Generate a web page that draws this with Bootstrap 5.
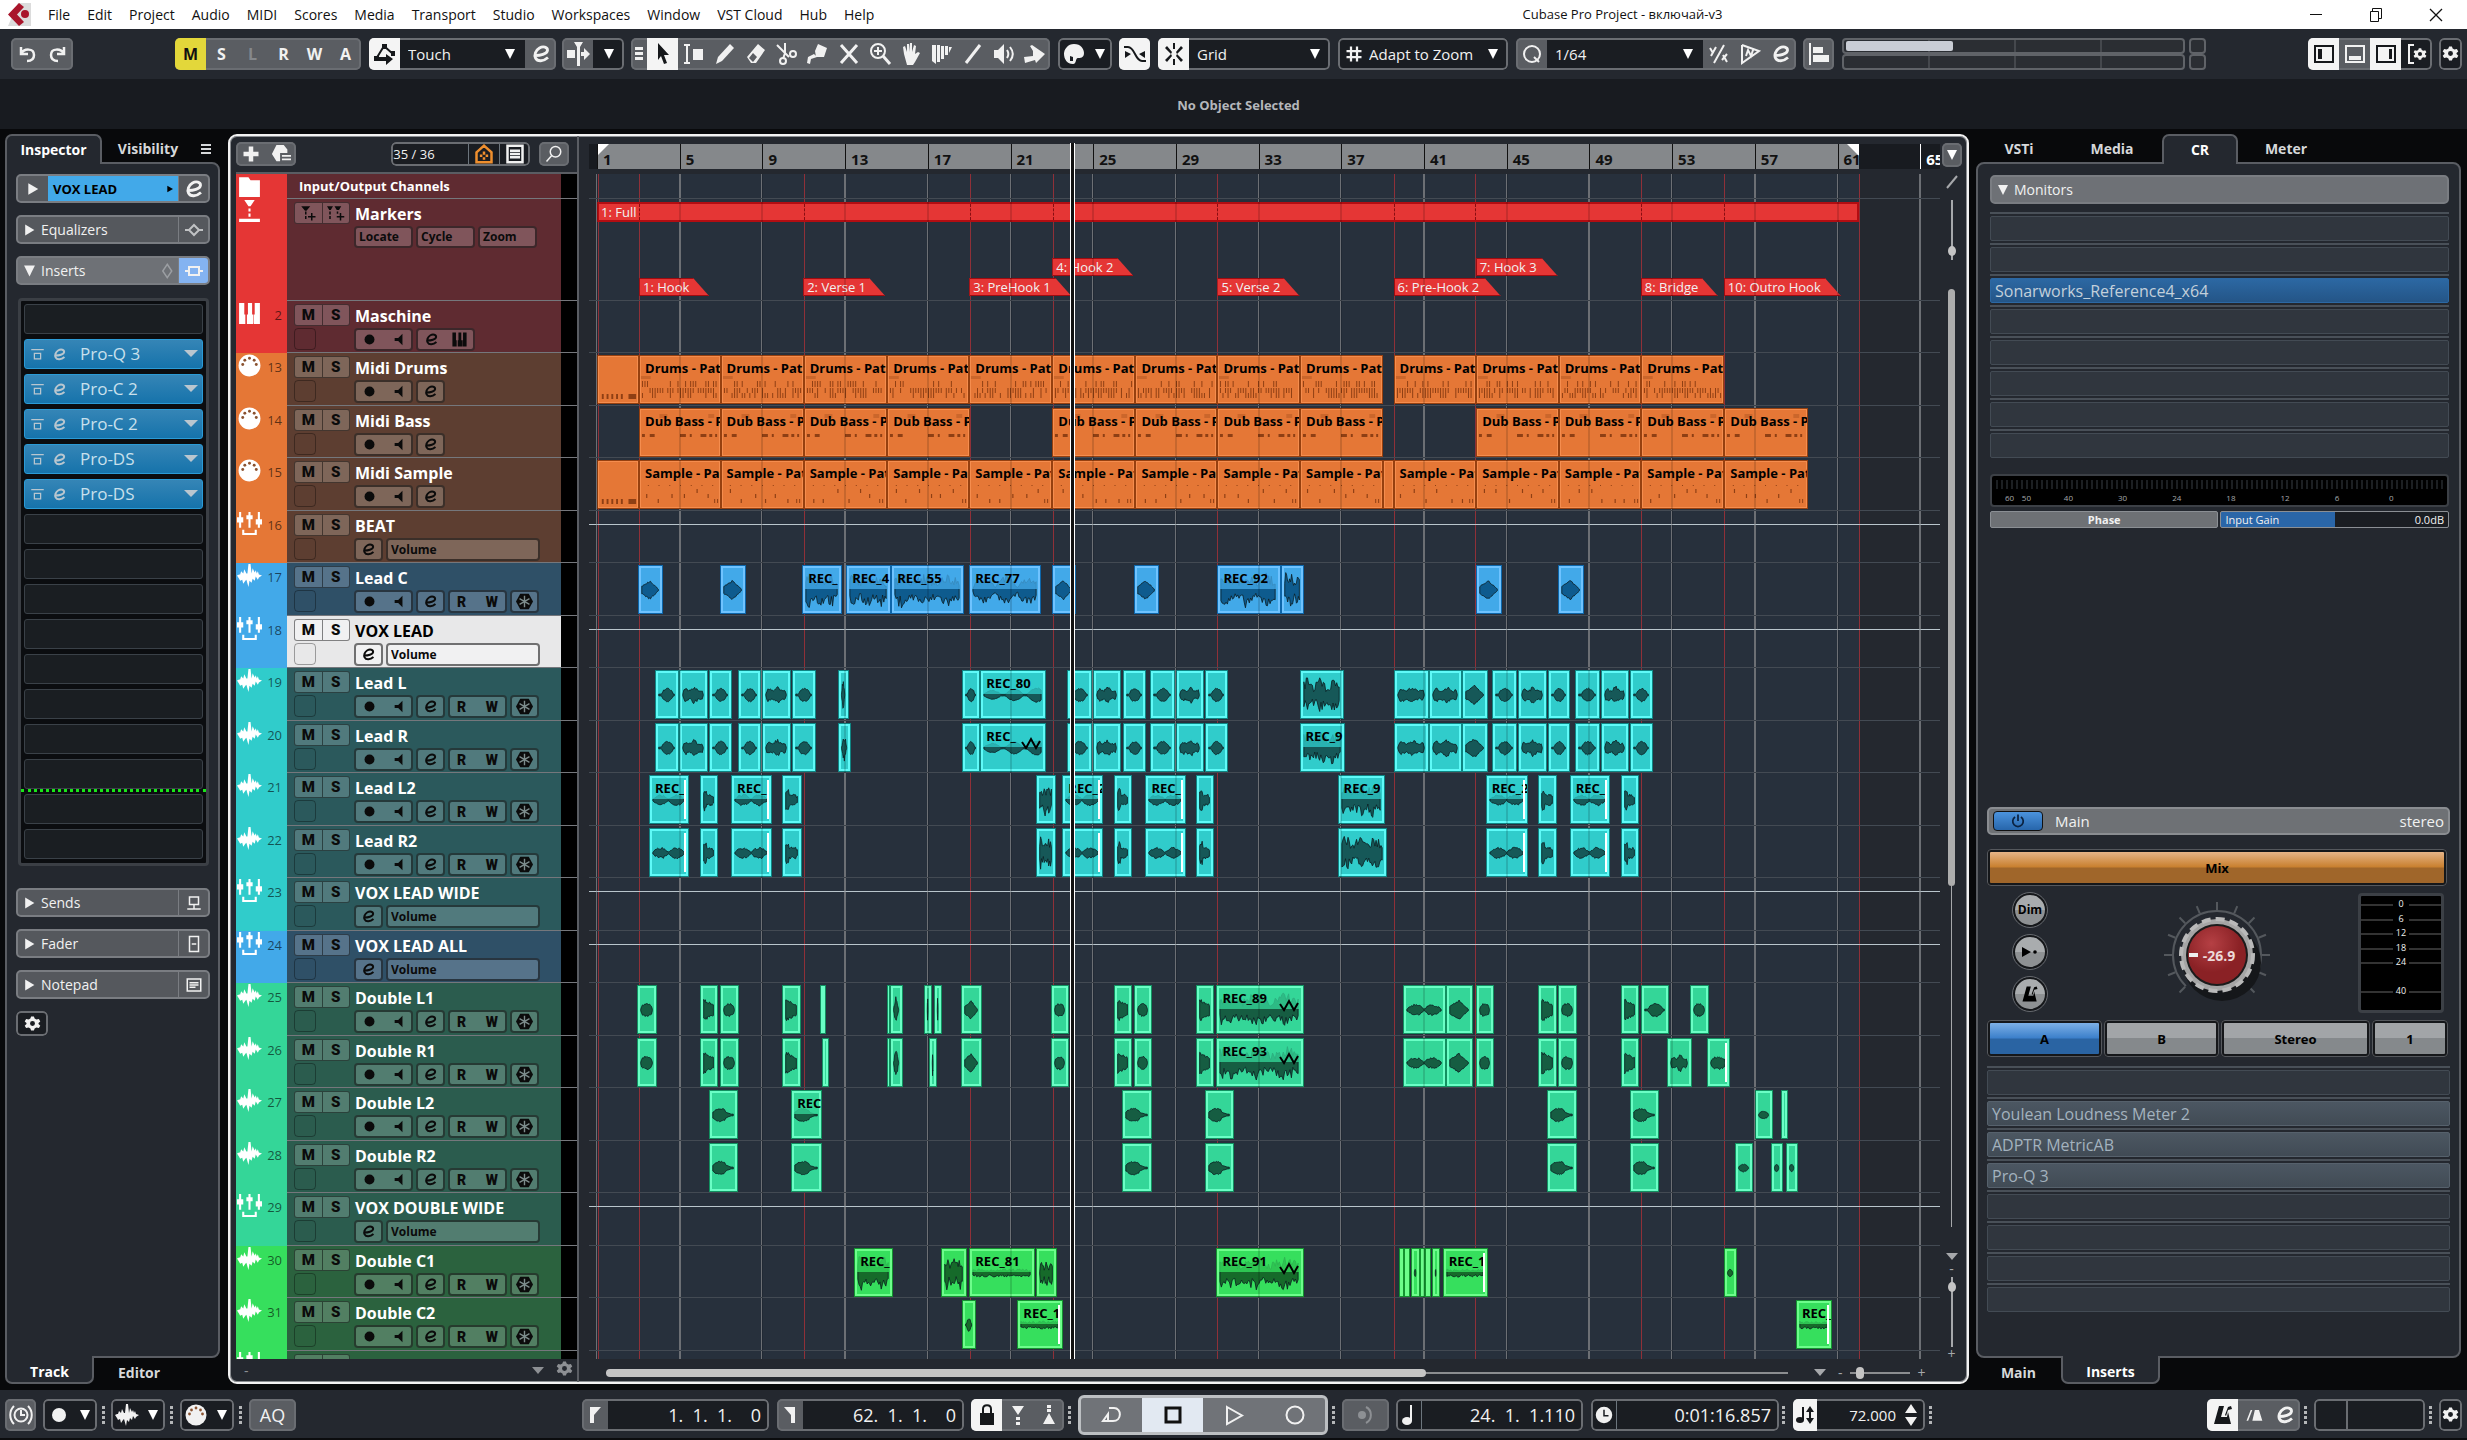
<!DOCTYPE html>
<html lang="en">
<head>
<meta charset="utf-8">
<meta name="viewport" content="width=device-width, initial-scale=1">
<title>Cubase Pro Project - включай-v3</title>
<link href="https://cdn.jsdelivr.net/npm/bootstrap@5.3.0/dist/css/bootstrap.min.css" rel="stylesheet">
<style>
:root{--panel:#24282f;--line:#5a5d63;--field:#1a1d22;--key:#5a5d62}
body{font-family:"Open Sans","Noto Sans",sans-serif;font-size:14px;line-height:18px;background:#08090b;color:#f1f1f1;overflow:hidden}
svg{display:block;fill:currentColor;flex:none}
button,select,input{font:inherit;color:inherit}
button{background:none;border:0;padding:0}
.ico{width:24px;height:24px}
.st{fill:none;stroke:currentColor;stroke-width:2}
.titlebar{height:29px;background:#fff;color:#111}
.titlebar a{color:#111;text-decoration:none}
.logo-box{width:23px;height:23px;margin-left:8px;margin-right:17px}
.titlebar nav{gap:17px}
.win-title{left:0;right:0;pointer-events:none;text-align:center;padding-left:778px;line-height:27px;font-size:13px;white-space:nowrap}
.win-keys{gap:44px;margin-right:23px}
.toolrow{height:50px;background:var(--panel);padding-bottom:1px}
.grp{height:32px;border-radius:5px;background:var(--key);display:flex;align-items:stretch;overflow:hidden;position:relative;flex:none}
.grp::before{content:"";position:absolute;inset:0;border:2px solid #6a6d72;border-radius:5px;pointer-events:none;z-index:1}
.grp>button,.cell{width:31px;display:flex;align-items:center;justify-content:center;font-weight:700;font-size:16px}
.grp>.on,.grp>.yel{position:relative;z-index:2}
.grp .dd{width:23px}
.grp .dd::after{right:7px}
.grp.dark,.dark{background:var(--field)}
.on{background:#f4f4f4;color:#16181b}
.yel{background:#e3d73a;color:#111}
.pick{position:relative;background:var(--field);display:flex}
.pick select{appearance:none;background:transparent;border:0;width:100%;padding:0 8px;font-size:15px;outline:0}
.pick::after,.tri::after{content:"";position:absolute;right:10px;top:11px;border:5px solid transparent;border-top:10px solid #fff;border-bottom:0}
.tri{position:relative}
.infobar{height:50px;background:#181b20;color:#b4b7bb;font-size:13px;font-weight:700;padding-left:10px;padding-top:2px}
.mainrow{padding:5px 6px 6px 5px;min-height:0}
.side-l{width:215px;margin-right:8px}
.side-r{width:485px;margin-left:7px}
.tabs{height:30px;font-weight:700;font-size:14px;position:relative;z-index:1;margin-bottom:-2px;flex:none}
.tabs.low{height:28px;margin:-2px 0 0}
.tabx{border:2px solid transparent;display:flex;align-items:center;justify-content:center;color:#d6d8da}
.low .tabx{padding-top:6px}
.tabx.act{background:var(--panel);border-color:var(--line);border-bottom:0;border-radius:7px 7px 0 0;color:#fff}
.low .tabx.act{border:2px solid var(--line);border-top:0;border-radius:0 0 7px 7px}
.pbody{border:2px solid var(--line);border-radius:8px;background:var(--panel);min-height:0}
.side-l .pbody{border-radius:0 8px 8px 0;padding:10px 8px 0 9px}
.side-r .pbody{padding:11px 10px 0 12px;border-radius:8px}
.sect{height:29px;border:2px solid #7a7d82;border-radius:5px;background:#55585d;display:flex;overflow:hidden;margin-bottom:12px;font-size:14px}
.sect.open{background:#6e7176}
.sect .nm{flex:1;display:flex;align-items:center;gap:5px;padding-left:5px}
.sect .rt{width:30px;border-left:1px solid #7a7d82;display:flex;align-items:center;justify-content:center}
.rack{border:3px solid #3b3f45;background:#0b0d10;border-radius:4px;padding:3px 3px 4px;margin:13px 1px 22px 2px;position:relative}
.slotl{height:30px;border:1px solid #3a4148;border-radius:3px;background:#1a1e22;margin-bottom:5px;display:flex;align-items:center;color:#c9e0ec;font-size:17px;width:100%}
.slotl.fx{background:linear-gradient(#3585b6,#1673ab);border-color:#2b9bd6}
.slotl.fx svg{color:#b9c6cf}
.slotl.fx span{flex:1;text-align:left;padding-left:12px}
.rack .slotl:last-child{margin-bottom:0}
.green{position:absolute;left:0;right:0;top:488px;border-top:3px dotted #19e619}
.center{border:2px solid #f2f2f2;border-radius:9px;background:var(--panel);box-shadow:inset 0 0 0 1px #8b8e92;min-width:0;overflow:hidden}
.tl{width:349px;padding:2px 0 0 6px;border-right:2px solid var(--line)}
.tl-head{height:36px;border-bottom:2px solid var(--line);padding:4px 8px 0 0;flex:none}
.tl-head .grp,.vs .grp{height:24px}
.tl-head .grp>button,.tl-head .cell{font-size:13px}
.rows{min-height:0;overflow:hidden;background:#000}
.rw{flex:none;height:52px;border-bottom:1px solid #75777c}
.rw.tall{height:53px}
.rw.io{height:25px}.rw.mk{height:102px}
.trk{display:flex;position:relative}
.strip{width:51px;background:var(--s);display:flex;position:relative;margin-bottom:-1px}
.strip svg{width:25px;height:25px;color:#fff;margin:0 0 0 1px}
.strip span{position:absolute;right:5px;top:5px;font-size:13px;color:#0009}
.tb{width:274px;background:var(--b);padding:3px 0 0 7px;display:grid;grid-template-columns:60px 1fr;grid-template-rows:22px 24px;row-gap:2px;color:#fff}
.tb .nam{font-weight:700;font-size:16px;line-height:24px;padding-left:1px;white-space:nowrap}
.ms{display:flex;width:56px;height:22px;border:1px solid #0007;border-radius:3px;background:var(--k);color:#0b0b0b;font:900 15px/18px Roboto,sans-serif}
.ms button{flex:1;border-right:1px solid #0007;display:flex;align-items:center;justify-content:center}.ms button:last-child{border:0}
.sq{width:22px;height:22px;border:1px solid #0005;border-radius:4px}
.kx{display:flex;gap:3px;color:#0b0b0b}
.kb{height:23px;border:2px solid #0008;border-radius:4px;background:var(--k);display:flex;align-items:center;justify-content:space-around;width:29px;font:900 14px/18px Roboto,sans-serif}
.kb.w2{width:59px;justify-content:space-between;padding:0 7px}
.kb svg{width:17px;height:17px}
.kb.w2 svg{margin:0 -2px}
select.kb{appearance:none;width:154px;padding:0 3px;font:700 12px/18px "Open Sans",sans-serif;color:#0b0b0b}
.kb.tx{width:59px;font:700 12px/16px "Open Sans",sans-serif;height:22px;justify-content:flex-start;padding-left:3px}
.cR{--s:#e53635;--b:#5f2b31;--k:#80555b}
.cO{--s:#e57736;--b:#5d3e31;--k:#7e6659;--d:#96400f;--l:#f58d4e;--w:#8e3f14}
.cB{--s:#42a9e9;--b:#2f5067;--k:#56738a;--d:#0d66aa;--l:#6fc3ff;--w:#0e5b8e}
.cT{--s:#30cccb;--b:#2b595c;--k:#517a7d;--d:#0f8583;--l:#5ffaf8;--w:#165858}
.cG{--s:#34d698;--b:#2b5c4e;--k:#527d70;--d:#129060;--l:#6afec5;--w:#165d42}
.cH{--s:#36df5d;--b:#2b623e;--k:#527f62;--d:#13922f;--l:#6dfd8b;--w:#166a2a}
.sel .tb{--b:#e8e8e9;--k:#f1f1f2;color:#000}
.arr{margin-left:10px;min-width:0;position:relative}
.ruler{height:25px;margin:8px 0 5px;background:#181b20;position:relative;overflow:hidden;flex:none}
.ruler .rng{position:absolute;top:0;bottom:0;background:#85888b}
.ruler b{position:absolute;top:0;height:25px;border-left:1px solid #111;padding-left:5px;font-size:15px;line-height:30px;color:#111}
.canvas{position:relative;min-height:0;overflow:hidden}
.bgr{position:absolute;top:0;bottom:0;background:#27303c}
.gl{position:absolute;top:0;bottom:0;width:1px;background:#7d8186}
.gl.t{width:2px}
.gl.r{background:#8f3038}
.gl.o{background:#0002;width:2px}
.lane{position:relative;border-color:#434a53}
.lane.auto::before{content:"";position:absolute;left:0;right:0;top:13px;border-top:1px solid #b9c5cc}
.clip{position:absolute;top:2px;height:49px;background:var(--s);border:1px solid var(--d);box-shadow:inset 0 0 0 2px var(--l);overflow:hidden;color:#000}
.clip.cO{box-shadow:inset 0 0 0 1px var(--l)}
.clip svg{position:absolute;left:0;top:0;width:100%;height:100%}
.clip .wv{fill:var(--w);stroke:#0a1a1ecc;stroke-width:1}
.clip .nt{fill:var(--w)}
.clip .veil{position:absolute;left:2px;top:2px;right:3px;height:21px;background:var(--s);opacity:.78}
.clip i{position:absolute;left:5px;top:3px;font:700 13px/18px "Open Sans",sans-serif;white-space:nowrap}
.clip u{position:absolute;right:2px;top:4px;bottom:4px;width:2px;background:#fff}
.full{position:absolute;top:3px;height:20px;background:#e53635;border:2px solid #b30d12;font-size:13px;line-height:17px;padding-left:2px}
.full s{position:absolute;top:0;bottom:0;border-left:1px dashed #8a0d12}
.flag{position:absolute;height:18px;background:#e53635;font-size:13px;line-height:17px;padding-left:3px;clip-path:polygon(0 0,calc(100% - 16px) 0,100% 100%,0 100%);white-space:nowrap;border:1px solid #a00b10}
.play{position:absolute;top:7px;bottom:23px;width:5px;border:solid #fff;border-width:0 1px;background:#111;z-index:3}
.foot{height:23px;flex:none}
.vs{width:27px;padding:7px 4px 0 0;color:#a6a8ab}
.thumbx{background:#adadad;border-radius:4px}
input[type=range]{appearance:none;background:transparent;height:14px;padding:0}
input[type=range]::-webkit-slider-runnable-track{height:2px;background:#8b8d90}
input[type=range]::-webkit-slider-thumb{appearance:none;width:8px;height:12px;border-radius:4px;background:#c4c4c4;margin-top:-5px}
input.hs::-webkit-slider-thumb{width:820px;height:8px;margin-top:-3px}
.slot{height:31px;border-top:2px solid #495058;padding-top:2px}
.slot button{display:block;width:100%;height:25px;border:1px solid #434b54;background:#30363e;border-radius:2px;text-align:left;padding-left:4px;font-size:16px;line-height:22px;color:#a3b2be}
.slot .fl{background:linear-gradient(#4c5762,#414b55);border-color:#56616c}
.slot .bl{background:linear-gradient(#2c68a3,#245587);border-color:#2c68a3;color:#c3d0db}
.mixer{margin-left:-3px;margin-right:-1px}
.bar-h{height:28px;border:2px solid #8a8d91;border-radius:5px;background:#6e7175;font-size:15px}
.mtr{height:33px;background:#000;border:2px solid #3c4046;border-radius:4px;font-size:8px;line-height:10px;color:#a5a8ab;flex:none}
.mtr .tk{height:9px;background:repeating-linear-gradient(90deg,#1c1f22 0 2px,#000 2px 5px)}
.mtr span{width:58px}
.phs{height:17px;font-size:11px;line-height:15px;font-weight:700;flex:none}
.phs>*{border:1px solid #8b8f94;border-radius:2px}
.bigk{height:37px;border:3px solid #15171a;outline:1px solid #55585d;outline-offset:-1px;border-radius:4px;background:linear-gradient(#a2a5a8 50%,#85898c 50%);color:#000;font-weight:700;font-size:13px}
.bigk.org{background:linear-gradient(#e6b487,#c9802f 48%,#a0662a 52%)}
.bigk.blu{background:linear-gradient(#7db0e6,#3c80cb 48%,#2a64a3 52%)}
.rnd{width:34px;height:34px;border-radius:50%;background:linear-gradient(#a9acae 50%,#8e9193 50%);border:2px solid #15171a;outline:1px solid #66696e;color:#000;font-weight:700;font-size:12px;display:flex;align-items:center;justify-content:center}
.lvl{width:86px;height:120px;background:#000;border:3px solid #3c4046;border-radius:4px;position:relative}
.botrow{height:50px;background:var(--panel);border-bottom:2px solid #0b0c0e;padding-top:1px}
.dots{width:3px;height:18px;flex:none;background:repeating-linear-gradient(#b4b6b8 0 3px,transparent 3px 5px)}
.posi{background:transparent;border:0;min-width:0;width:100%;text-align:right;padding:0 8px;font-size:18px;outline:0}
.trans{height:40px;border:3px solid #bcbfc2;border-radius:6px;background:#707378;display:flex;overflow:hidden;flex:none}
.trans button{width:61px;display:flex;align-items:center;justify-content:center}
.perf{width:343px;height:32px;display:grid;flex:none}
.perf div{border:2px solid #606368;border-radius:4px;background:repeating-linear-gradient(90deg,#2b2e33 0 84px,#45484d 84px 86px);position:relative}
.perf span{position:absolute;left:2px;top:1px;bottom:1px;width:107px;background:#c9cdd5;border-radius:2px}
</style>
</head>
<body class="vh-100 d-flex flex-column">
<svg width="0" height="0" class="position-absolute" aria-hidden="true">
<symbol id="e" viewBox="0 0 24 24"><path class="st" style="stroke-width:2.800" d="M6 13.500C11 13.600 18 12 18.500 8.500 18.800 5 14 4 10.500 6 6.500 8.300 5 13 6.500 16 8.500 20 14.500 19.500 19 15.500"/></symbol>
<symbol id="keys" viewBox="0 0 24 24"><path d="M2 2h5v11h1v9H2zM9.500 13h1V2h4v11h1v9h-6zM17 2h5v20h-6v-9h1z"/></symbol>
<symbol id="midi" viewBox="0 0 24 24"><circle cx="12" cy="12" r="10.500"/><g fill="#8a5230"><circle cx="5.500" cy="11" r="1.400"/><circle cx="7.500" cy="7" r="1.400"/><circle cx="12" cy="5" r="1.400"/><circle cx="16.500" cy="7" r="1.400"/><circle cx="18.500" cy="11" r="1.400"/></g></symbol>
<symbol id="grpi" viewBox="0 0 24 24"><path d="M2 1h2v5h2v5H4v5H2v-5H0V6h2zM11 1h2v3h2v4h-2v8h-2V8H9V4h2zM20 1h2v7h2v5h-2v3h-2v-3h-2V8h2zM5 18h2v3h10v-3h2v5H5z"/></symbol>
<symbol id="wav" viewBox="0 0 24 24"><path d="M0 12l2-1 1 0 1-3 2 2 1-4 2 4 1 0L11 1l2 0 1 9 1-5 2 4 1-2 1 3 1-2 1 3 3 1-3 2-1 2-2-3-1 4-2-2-1 4-2-2-1 6-2-7-1 1-2 3-1-4-2 1-1-2z"/></symbol>
<symbol id="fold" viewBox="0 0 24 24"><path d="M2 3h9l2 3h9v16H2z"/></symbol>
<symbol id="mark" viewBox="0 0 24 24"><path d="M7 1h10l-4 6h-2zM11 9h2v3h-2zM11 14h2v3h-2zM2 19h20v3H2z"/></symbol>
<symbol id="spk" viewBox="0 0 24 24"><path d="M8 10h5l6-6v16l-6-6H8z"/></symbol>
<symbol id="rec" viewBox="0 0 24 24"><circle cx="12" cy="12" r="7"/></symbol>
<symbol id="frz" viewBox="0 0 24 24"><path d="M6 1h12l6 11-6 11H6L0 12z"/><path d="M12 4v16M5 8l14 8M19 8L5 16" stroke="#7d8c8c" stroke-width="2"/></symbol>
<symbol id="gear" viewBox="0 0 24 24"><path fill-rule="evenodd" d="M10 2h4l1 3 2.500 1.300L21 5.500l2 3.500-2.500 2.200v1.600L23 15l-2 3.500-3.500-.8L15 19l-1 3h-4l-1-3-2.500-1.300-3.500.8L1 15l2.500-2.200v-1.600L1 9l2-3.500 3.500.8L9 5zM12 8.500a3.500 3.500 0 100 7 3.500 3.500 0 000-7z"/></symbol>
<symbol id="rt" viewBox="0 0 24 24"><path d="M4 2l17 10-17 10z"/></symbol>
<symbol id="dn" viewBox="0 0 24 24"><path d="M2 2h20L12 22z"/></symbol>
<symbol id="met" viewBox="0 0 24 24"><path fill-rule="evenodd" d="M8 3h5l-3 11h6l1-5 3 12H3zM14 12l3-8 3-1 1 3-4 1-2 6z"/></symbol>
<symbol id="byp" viewBox="0 0 24 24"><path class="st" d="M2 4h20M7 10h10v9H7z"/></symbol>
<symbol id="mk1" viewBox="0 0 24 24"><path d="M3 3h12l-5 6H8zM8 10h2v4H8zM8 16h2v4H8zM16 12h2v4h4v2h-4v4h-2v-4h-4v-2h4z"/></symbol>
<symbol id="mk2" viewBox="0 0 24 24"><path d="M0 3h8L5 8H3zM3 10h2v4H3zM3 16h2v4H3zM10 3h9l-3 5h-3zM13 10h2v3h-2zM17 12h2v4h4v2h-4v4h-2v-4h-4v-2h4z"/></symbol>
</svg>

<header class="titlebar flex-shrink-0 d-flex align-items-center position-relative">
  <svg class="logo-box" viewBox="0 0 23 23"><path d="M10 0h13v23H0z" fill="#dcdcdc"/><path d="M11 0L0 11.500 11 23l5-4-7-7.500L16 4z" fill="#a9152b"/><circle cx="17" cy="11" r="4" fill="#a9152b"/></svg>
  <nav class="d-flex"><a href="#">File</a><a href="#">Edit</a><a href="#">Project</a><a href="#">Audio</a><a href="#">MIDI</a><a href="#">Scores</a><a href="#">Media</a><a href="#">Transport</a><a href="#">Studio</a><a href="#">Workspaces</a><a href="#">Window</a><a href="#">VST Cloud</a><a href="#">Hub</a><a href="#">Help</a></nav>
  <div class="win-title position-absolute"><span>Cubase Pro Project - включай-v3</span></div>
  <div class="win-keys d-flex ms-auto position-relative">
    <button aria-label="Minimize"><svg width="16" height="16" viewBox="0 0 16 16"><path d="M2 7.500h12" stroke="#111"/></svg></button>
    <button aria-label="Restore"><svg width="16" height="16" viewBox="0 0 16 16"><path style="fill:none" stroke="#111" d="M2.500 4.500h8v10h-8zM4.500 4V1.500h9v10H11"/></svg></button>
    <button aria-label="Close"><svg width="16" height="16" viewBox="0 0 16 16"><path d="M2 2l12 12M14 2L2 14" stroke="#111" stroke-width="1.300"/></svg></button>
  </div>
</header>

<div class="toolrow flex-shrink-0 d-flex align-items-center" id="toolbar">
  <div class="grp" style="margin-left:11px"><button aria-label="Undo"><svg class="ico" viewBox="0 0 24 24"><path class="st" style="stroke-width:2.500" d="M6 5v7h7M6 12c3-6 13-6 13 1 0 4-3 6-7 6"/></svg></button><button aria-label="Redo"><svg class="ico" viewBox="0 0 24 24"><path class="st" style="stroke-width:2.500" d="M18 5v7h-7M18 12c-3-6-13-6-13 1 0 4 3 6 7 6"/></svg></button></div>
  <div class="grp" style="margin-left:102px"><button class="yel">M</button><button>S</button><button style="color:#85888c">L</button><button>R</button><button>W</button><button>A</button></div>
  <div class="grp ms-2" style="width:187px"><button class="on" aria-label="Automation"><svg class="ico" viewBox="0 0 24 24"><path class="st" d="M3 17L11 4l9 8"/><path d="M1 14h5v5H1zM9 2h5v5H9zM18 9h4v5h-4zM5 15h8v-3l7 5-7 6v-4H5z"/></svg></button><div class="pick flex-fill"><select aria-label="Automation mode"><option>Touch</option></select></div><button aria-label="Edit automation"><svg class="ico"><use href="#e"/></svg></button></div>
  <div class="grp" style="margin-left:6px"><button aria-label="Auto-scroll"><svg class="ico" viewBox="0 0 24 24"><path d="M1 8h8v8H1zM11 0h3v24h-3zM8 0h9l-3 5h-3zM15 10h3V6l6 6-6 6v-4h-3z"/></svg></button><button class="dark tri" aria-label="Auto-scroll options"></button></div>
  <div class="grp" id="tools" style="margin-left:7px"></div>
  <div class="grp dark ms-2"><div class="cell"><svg class="ico" viewBox="0 0 24 24"><path d="M12 2c7 0 10 5 10 9 0 5-4 5-6 5-3 0-1 6-5 6C5 22 2 17 2 12S6 2 12 2zM8 14v5h3v-4z" fill-rule="evenodd"/></svg></div><button class="tri dd" aria-label="Colour"></button></div>
  <div class="grp" style="margin-left:7px"><button class="on" aria-label="Snap crossing"><svg class="ico" viewBox="0 0 24 24"><path class="st" d="M1 5h4c7 0 7 14 14 14h4"/><path d="M2 9l6 3-6 4zM22 9l-6 3 6 4z"/></svg></button></div>
  <div class="grp ms-2" style="width:172px"><button class="on" aria-label="Snap"><svg class="ico" viewBox="0 0 24 24"><path d="M9 12L3 6 5 4l5 6zM15 12l6-6-2-2-5 6zM9 12l-6 6 2 2 5-6zM15 12l6 6-2 2-5-6zM11 1h2v6h-2zM11 17h2v6h-2z"/></svg></button><div class="pick flex-fill"><select aria-label="Snap type"><option>Grid</option></select></div></div>
  <div class="grp dark ms-2" style="width:170px"><div class="cell"><svg width="18" height="18" viewBox="0 0 24 24"><path class="st" style="stroke-width:3" d="M8 2v20M16 2v20M2 8h20M2 16h20"/></svg></div><div class="pick flex-fill"><select class="ps-0" aria-label="Grid type"><option>Adapt to Zoom</option></select></div></div>
  <div class="grp ms-2" style="width:280px"><button aria-label="Quantize"><svg class="ico" viewBox="0 0 24 24"><circle class="st" cx="12" cy="12" r="8"/><path class="st" d="M14 15l5 5"/></svg></button><div class="pick flex-fill"><select aria-label="Quantize preset"><option>1/64</option></select></div><button aria-label="Iterative quantize"><svg class="ico" viewBox="0 0 24 24"><path class="st" d="M17 3L7 21M3 6l3 5M9 5L4 14M15 18l5-6M16 13l4 7"/></svg></button><button aria-label="Quantize audio"><svg class="ico" viewBox="0 0 24 24"><path class="st" d="M4 3v18L21 9 4 3M8 14l2-6 3 6 2-6"/></svg></button><button aria-label="Open quantize panel"><svg class="ico"><use href="#e"/></svg></button></div>
  <div class="grp" style="margin-left:7px"><button aria-label="Align"><svg class="ico" viewBox="0 0 24 24"><path d="M2 1h2v22H2zM6 5h10v6H6zM6 13h16v7H6z"/></svg></button></div>
  <div class="perf" style="margin-left:8px"><div><span></span></div><div></div></div>
  <div class="perf" style="width:17px;margin-left:4px"><div></div><div></div></div>
  <div class="grp ms-auto"><button class="on" aria-label="Left zone"><svg class="ico" viewBox="0 0 24 24"><path class="st" d="M3 4h18v16H3z"/><path d="M6 7h4v10H6z"/></svg></button><button aria-label="Lower zone"><svg class="ico" viewBox="0 0 24 24"><path class="st" d="M3 4h18v16H3z"/><path d="M6 14h12v4H6z"/></svg></button><button class="on" aria-label="Right zone"><svg class="ico" viewBox="0 0 24 24"><path class="st" d="M3 4h18v16H3z"/><path d="M15 7h3v10h-3z"/></svg></button><button class="dark" aria-label="Window layout"><svg class="ico" viewBox="0 0 24 24"><path class="st" d="M9 3H4v18h5"/><use href="#gear" x="8" y="5" width="14" height="14"/></svg></button></div>
  <div class="grp dark" style="margin:0 5px 0 7px"><button style="width:23px" aria-label="Set up toolbar"><svg width="17" height="17"><use href="#gear"/></svg></button></div>
</div>
<div class="infobar flex-shrink-0 d-flex align-items-center justify-content-center">No Object Selected</div>

<main class="mainrow flex-fill d-flex">
  <aside class="side-l d-flex flex-column">
    <div class="tabs d-flex"><button class="tabx act" style="width:97px">Inspector</button><button class="tabx" style="width:92px">Visibility</button><button class="tabx ms-1" aria-label="Inspector set-up"><svg width="12" height="12" viewBox="0 0 12 12"><path d="M1 1h10v2H1zM1 5h10v2H1zM1 9h10v2H1z"/></svg></button></div>
    <div class="pbody flex-fill">
      <div class="sect"><button class="rt border-0" aria-label="Expand"><svg width="14" height="16"><use href="#rt"/></svg></button><button class="nm fw-bold text-black" style="background:#42a9e9;padding-right:4px;font-size:13px"><span class="flex-fill text-start">VOX LEAD</span><svg width="8" height="12"><use href="#rt"/></svg></button><button class="rt" aria-label="Edit channel"><svg class="ico"><use href="#e"/></svg></button></div>
      <div class="sect"><button class="nm"><svg width="13" height="14"><use href="#rt"/></svg>Equalizers</button><button class="rt" aria-label="Bypass equalizers"><svg class="ico" viewBox="0 0 24 24" style="color:#c0c2c4"><path class="st" d="M3 12h4M17 12h4M12 7l5 5-5 5-5-5z"/></svg></button></div>
      <div class="sect open mb-0"><button class="nm"><svg width="13" height="14"><use href="#dn"/></svg><span class="flex-fill text-start">Inserts</span><svg width="20" height="18" viewBox="0 0 24 24" style="color:#9b9ea2"><path class="st" d="M11 3l6 9-6 9-6-9z"/></svg></button><button class="rt" style="background:#84b3f1" aria-label="Bypass inserts"><svg class="ico" viewBox="0 0 24 24"><path class="st" d="M3 12h4M17 12h4M7 8h10v8H7z"/></svg></button></div>
      <div class="rack" id="rack"><div class="green"></div></div>
      <div class="sect"><button class="nm"><svg width="13" height="14"><use href="#rt"/></svg>Sends</button><button class="rt" aria-label="Bypass sends"><svg width="18" height="18" viewBox="0 0 24 24"><path class="st" d="M6 4h12v10H6zM12 14v6M3 20h18"/></svg></button></div>
      <div class="sect"><button class="nm"><svg width="13" height="14"><use href="#rt"/></svg>Fader</button><button class="rt" aria-label="Fader view"><svg width="18" height="18" viewBox="0 0 24 24"><path class="st" d="M6 2h12v20H6zM9 12h6"/></svg></button></div>
      <div class="sect"><button class="nm"><svg width="13" height="14"><use href="#rt"/></svg>Notepad</button><button class="rt" aria-label="Notes"><svg width="18" height="18" viewBox="0 0 24 24"><path class="st" d="M3 4h18v16H3zM6 9h12M6 12h12M6 15h8"/></svg></button></div>
      <button class="grp justify-content-center align-items-center dark" style="height:25px;width:32px" aria-label="Inspector settings"><svg width="17" height="17"><use href="#gear"/></svg></button>
    </div>
    <div class="tabs low d-flex"><button class="tabx act" style="width:89px">Track</button><button class="tabx" style="width:90px">Editor</button></div>
  </aside>

  <section class="center flex-fill d-flex">
    <div class="tl d-flex flex-column flex-shrink-0">
      <div class="tl-head d-flex">
        <div class="grp"><button style="width:30px" aria-label="Add track"><svg width="18" height="18" viewBox="0 0 24 24"><path d="M9 2h6v7h7v6h-7v7H9v-7H2V9h7z"/></svg></button><button style="width:30px" aria-label="Use track preset"><svg width="22" height="20" viewBox="0 0 24 22"><path fill-rule="evenodd" d="M7 1h8l4 5v4H11v9H7L2 11zM13 12h10v2H13zM13 16h10v2H13z"/></svg></button></div>
        <div class="grp dark ms-auto"><div class="cell fw-normal" style="width:77px;padding-right:31px">35 / 36</div><button class="border-start border-secondary" style="color:#ef8f2e" aria-label="Global tracks"><svg width="20" height="20" viewBox="0 0 24 24"><path class="st" style="stroke-width:3" d="M3 10l9-8 9 8v12H3zM12 9v4M12 16v3M7 14h3M14 14h3"/></svg></button><button class="border-start border-secondary" aria-label="Filter track types"><svg width="20" height="20" viewBox="0 0 24 24"><path class="st" style="stroke-width:3" d="M3 2h18v20H3zM6 8h12M6 12h12M6 16h12"/></svg></button></div>
        <div class="grp" style="margin-left:9px"><button style="width:30px" aria-label="Find tracks"><svg width="18" height="18" viewBox="0 0 24 24"><circle class="st" cx="14" cy="9" r="7"/><path class="st" d="M9 14l-7 8"/></svg></button></div>
      </div>
      <div class="rows flex-fill d-flex flex-column" id="rows"></div>
      <div class="foot d-flex align-items-center" style="color:#8d9094"><span class="ps-2">-</span><svg class="ms-auto" width="12" height="8" viewBox="0 0 12 8"><path d="M0 0h12L6 7z"/></svg><svg width="17" height="17" style="margin:0 4px 4px 12px"><use href="#gear"/></svg></div>
    </div>
    <div class="arr flex-fill d-flex flex-column">
      <div class="ruler" id="ruler"></div>
      <div class="canvas flex-fill d-flex flex-column" id="canvas"></div>
      <div class="foot d-flex align-items-center pt-1" style="color:#a6a8ab"><input class="hs" type="range" aria-label="Horizontal scroll" value="0" style="margin-left:17px;width:1182px"><svg style="margin-left:26px" width="12" height="8" viewBox="0 0 12 8"><path d="M0 0h12L6 7z"/></svg><span style="margin:0 7px 0 12px">-</span><input type="range" aria-label="Horizontal zoom" value="12" style="width:60px"><span class="ms-2">+</span></div>
      <div class="play" style="left:35.63%"></div>
    </div>
    <div class="vs d-flex flex-column align-items-center flex-shrink-0">
      <button class="grp justify-content-center align-items-center" style="width:20px;color:#fff" aria-label="Ruler options"><svg width="12" height="14"><use href="#dn"/></svg></button>
      <svg class="mt-2" width="12" height="14" viewBox="0 0 12 14"><path d="M1 13L11 1" stroke="currentColor" stroke-width="2"/></svg>
      <svg style="margin-top:11px" width="8" height="60" viewBox="0 0 8 60"><path d="M3 0h2v60H3z"/><ellipse cx="4" cy="51" rx="4" ry="5" fill="#c4c4c4"/></svg>
      <div class="thumbx" style="width:7px;height:597px;margin-top:29px"></div>
      <div class="flex-fill" style="width:1px;background:#a6a8ab"></div>
      <svg style="margin-top:26px" width="12" height="8" viewBox="0 0 12 8"><path d="M0 0h12L6 7z"/></svg>
      <span style="line-height:16px">-</span>
      <svg width="8" height="70" viewBox="0 0 8 70"><path d="M3 0h2v70H3z"/><ellipse cx="4" cy="10" rx="4" ry="5" fill="#c4c4c4"/></svg>
      <span style="line-height:14px;margin-bottom:21px">+</span>
    </div>
  </section>

  <aside class="side-r d-flex flex-column">
    <div class="tabs d-flex"><button class="tabx" style="width:86px">VSTi</button><button class="tabx" style="width:100px">Media</button><button class="tabx act" style="width:76px">CR</button><button class="tabx" style="width:96px">Meter</button></div>
    <div class="pbody flex-fill d-flex flex-column">
      <div class="sect open flex-shrink-0" style="margin-bottom:8px"><button class="nm"><svg width="12" height="14"><use href="#dn"/></svg>Monitors</button></div>
      <div id="mon"></div>
      <div class="mtr px-1" style="margin-top:14px">
        <div class="tk mt-1"></div>
        <div class="d-flex mt-1" style="padding-left:9px"><span style="width:18px">60</span><span style="width:45px">50</span><span>40</span><span>30</span><span>24</span><span>18</span><span>12</span><span>6</span><span>0</span></div>
      </div>
      <div class="phs d-flex mt-1" style="gap:2px"><button class="w-50" style="background:#6e7175">Phase</button><div class="w-50 d-flex justify-content-between dark px-1" style="background:linear-gradient(90deg,#2a66a8 50%,#1a1d22 50%)"><span class="fw-normal">Input Gain</span><span class="fw-normal">0.0dB</span></div></div>
      <div class="mixer mt-auto">
        <div class="bar-h d-flex align-items-center"><button class="d-flex justify-content-center align-items-center rounded-1" style="width:50px;height:20px;margin:0 12px 0 4px;background:linear-gradient(#4b93dd,#2766ab);border:1px solid #111;color:#0b2342" aria-label="Power"><svg width="14" height="14" viewBox="0 0 24 24"><path class="st" style="stroke-width:3" d="M7 5a9 9 0 1010 0M12 1v11"/></svg></button><span>Main</span><span class="ms-auto" style="padding-right:4px">stereo</span></div>
        <button class="bigk org d-block" style="margin:14px 0 7px;width:460px">Mix</button>
        <div class="d-flex justify-content-between" style="padding:0 6px 0 26px;height:121px">
          <div class="d-flex flex-column" style="gap:8px"><button class="rnd">Dim</button><button class="rnd" aria-label="Reference level"><svg width="18" height="12" viewBox="0 0 18 12"><path d="M1 1l9 5-9 5z"/><circle cx="14" cy="6" r="1.800"/></svg></button><button class="rnd" aria-label="Metronome"><svg width="20" height="20"><use href="#met"/></svg></button></div>
          <svg width="124" height="124" viewBox="-62 -62 124 124" style="margin-left:28px"><defs><radialGradient id="rg" cx=".4" cy=".3"><stop offset="0" stop-color="#b54044"/><stop offset="1" stop-color="#8a2125"/></radialGradient></defs><g id="ticks" stroke="#54585d" stroke-width="2"></g><circle r="44" style="fill:none" stroke="#54585d" stroke-width="2" stroke-dasharray="207 70" transform="rotate(135)"/><ellipse cx="5" cy="8" rx="39" ry="38" fill="#15171a"/><circle r="36" fill="#a5a5a5"/><circle r="36" style="fill:none" stroke="#b9b9b9" stroke-width="4" stroke-dasharray="9 5"/><circle r="31" fill="#1b1b1b"/><circle r="29" fill="url(#rg)"/><path d="M-28-2h9v4h-9z" fill="#eee"/><text x="2" y="6" text-anchor="middle" font-size="14" font-weight="700" fill="#ecd9d9">-26.9</text></svg>
          <svg class="lvl" viewBox="0 0 80 114" font-size="9" fill="#8b8e92" text-anchor="middle" id="lvl"></svg>
        </div>
        <div class="d-flex" style="gap:2px;margin:6px 2px 9px 0"><button class="bigk blu" style="width:115px">A</button><button class="bigk" style="width:115px">B</button><button class="bigk flex-fill">Stereo</button><button class="bigk" style="width:76px">1</button></div>
        <div id="ins" style="margin-bottom:42px"></div>
      </div>
    </div>
    <div class="tabs low d-flex"><button class="tabx" style="width:85px">Main</button><button class="tabx act" style="width:99px">Inserts</button></div>
  </aside>
</main>

<footer class="botrow flex-shrink-0 d-flex align-items-center">
  <div class="grp" style="margin-left:5px"><button aria-label="Constrain delay"><svg class="ico" viewBox="0 0 24 24"><path class="st" d="M5 3C0 8 0 16 5 21M19 3c5 5 5 13 0 18"/><circle class="st" cx="12" cy="12" r="6.500"/><path class="st" d="M12 7v5h4"/></svg></button></div>
  <div class="grp dark" style="margin-left:7px"><button aria-label="Record mode"><svg class="ico"><use href="#rec"/></svg></button><button class="tri dd" aria-label="Record mode options"></button></div><div class="dots" style="margin:0 6px 0 5px"></div>
  <div class="grp dark"><button aria-label="Audio record mode"><svg class="ico"><use href="#wav"/></svg></button><button class="tri dd" aria-label="Audio mode options"></button></div><div class="dots" style="margin:0 7px 0 5px"></div>
  <div class="grp dark"><button aria-label="MIDI record mode"><svg class="ico"><use href="#midi"/></svg></button><button class="tri dd" aria-label="MIDI mode options"></button></div><div class="dots" style="margin:0 7px 0 5px"></div>
  <div class="grp"><button style="width:47px;font-weight:400;font-size:18px">AQ</button></div>
  <div class="grp dark" style="margin-left:286px;width:187px"><button style="background:#5a5d62" aria-label="Left locator"><svg width="16" height="20" viewBox="0 0 16 20"><path d="M3 2h11L7 10v8H3z"/></svg></button><input class="posi" aria-label="Left locator position" value="1.  1.  1.    0"></div>
  <div class="grp dark" style="margin-left:8px;width:187px"><button style="background:#5a5d62" aria-label="Right locator"><svg width="16" height="20" viewBox="0 0 16 20"><path d="M2 2h11v16H9v-8z"/></svg></button><input class="posi" aria-label="Right locator position" value="62.  1.  1.    0"></div>
  <div class="grp" style="margin-left:7px"><button class="on" aria-label="Lock punch"><svg width="18" height="22" viewBox="0 0 18 22"><path d="M2 9h14v12H2z"/><path class="st" d="M5 10V5c0-5 8-5 8 0v5"/></svg></button><button aria-label="Punch in"><svg width="16" height="22" viewBox="0 0 16 22"><path d="M2 2h12L8 11zM6 13h4v3H6zM6 18h4v3H6z"/></svg></button><button aria-label="Punch out"><svg width="16" height="22" viewBox="0 0 16 22"><path d="M2 20h12L8 9zM6 1h4v3H6zM6 5h4v3H6z"/></svg></button></div><div class="dots" style="margin:0 7px 0 4px"></div>
  <div class="trans"><button aria-label="Cycle"><svg class="ico" viewBox="0 0 24 24"><path class="st" d="M9 5h5c8 0 8 13-1 13H3l5-7v7"/></svg></button><button style="background:#e2e9f2;color:#111" aria-label="Stop"><svg class="ico" viewBox="0 0 24 24"><path class="st" style="stroke-width:3" d="M5 5h14v14H5z"/></svg></button><button aria-label="Play"><svg class="ico" viewBox="0 0 24 24"><path class="st" d="M5 4l15 8.500L5 21z"/></svg></button><button aria-label="Record"><svg class="ico" viewBox="0 0 24 24"><circle class="st" cx="12" cy="12" r="8.500"/></svg></button></div><div class="dots" style="margin:0 7px 0 4px"></div>
  <div class="grp"><button style="width:47px;color:#8d9094" aria-label="Activate metronome click"><svg class="ico" viewBox="0 0 24 24"><circle cx="8" cy="12" r="4"/><path class="st" d="M12 4a9 9 0 010 16"/></svg></button></div>
  <div class="grp dark" style="margin-left:7px;width:187px"><button class="border-end border-secondary" aria-label="Primary time format"><svg width="18" height="22" viewBox="0 0 18 22"><ellipse cx="7" cy="17" rx="5" ry="4"/><path d="M10 1h2v16h-2z"/></svg></button><input class="posi" aria-label="Primary time" value="24.  1.  1.110"></div>
  <div class="grp dark" style="margin-left:8px;width:188px"><button class="border-end border-secondary" aria-label="Secondary time format"><svg width="18" height="18" viewBox="0 0 24 24"><path fill-rule="evenodd" d="M12 1a11 11 0 100 22 11 11 0 000-22zM11 5h2v7h5v2h-7z"/></svg></button><input class="posi" aria-label="Secondary time" value="0:01:16.857"></div><div class="dots" style="margin:0 8px 0 3px"></div>
  <div class="grp dark" style="width:132px"><button class="on" aria-label="Tempo track"><svg class="ico" viewBox="0 0 24 24"><ellipse cx="7" cy="17" rx="4" ry="3"/><path d="M9 4h2v13H9zM16 9v6h-3l4 6 4-6h-3V9h3l-4-6-4 6z"/></svg></button><input class="posi" style="font-size:15px" aria-label="Tempo" value="72.000"><svg class="align-self-center" style="margin-right:7px" width="14" height="22" viewBox="0 0 14 22"><path d="M7 0l6 9H1zM7 22l6-9H1z"/></svg></div><div class="dots" style="margin-left:4px"></div>
  <div class="grp ms-auto"><button class="on" aria-label="Metronome"><svg class="ico"><use href="#met"/></svg></button><button aria-label="Count-in"><svg width="20" height="20" viewBox="0 0 24 24"><path d="M10 19l3-13h5l4 13zM3 19L8 6h2L5 19z"/></svg></button><button aria-label="Metronome setup"><svg class="ico"><use href="#e"/></svg></button></div><div class="dots" style="margin:0 7px 0 4px"></div>
  <div class="grp dark" style="width:111px"><div style="width:34px;border-right:2px solid #6a6d72"></div></div><div class="dots" style="margin:0 7px 0 4px"></div>
  <div class="grp dark" style="margin-right:5px"><button style="width:23px" aria-label="Set up transport"><svg width="17" height="17"><use href="#gear"/></svg></button></div>
</footer>

<script>
const $ = id => document.getElementById(id);
const use = (n) => `<svg><use href="#${n}"/></svg>`;
// seeded noise so that waveforms stay the same between loads
let seed = 7;
const rnd = () => (seed = (seed * 16807) % 2147483647) / 2147483647;
const L0 = 590, LW = 1350;
const pct = v => (v / LW * 100).toFixed(3) + '%';
const at = (a, b) => `left:${pct(a - L0)};width:${pct(b - a)}`;
const barX = n => 598 + (n - 1) * 20.66;

// tool palette
const tools = {
  'Object selection': '<path d="M7 1l11 12h-5l3 8-3 1-3-8-3 4z"/>',
  'Range selection': '<path class="st" d="M2 3h6M2 21h6M5 3v18"/><path d="M11 7h10v11H11z"/>',
  'Draw': '<path d="M3 22l2-7L17 2l4 4L9 19z"/>', 'Erase': '<path fill-rule="evenodd" d="M3 15L14 2l7 6-9 13H7zM5 16l4 4 4-5-4-4z"/>',
  'Split': '<path class="st" d="M2 3l12 12M10 1v10l-2 6"/><circle class="st" cx="8" cy="19" r="3"/><circle class="st" cx="18" cy="12" r="3"/>',
  'Glue': '<path d="M12 2l9 4-3 9h-8l-1-6zM8 12l3 3-6 2-1 5-3-1 1-6z"/>', 'Mute': '<path class="st" style="stroke-width:3" d="M4 3l16 18M20 3L4 21"/>',
  'Zoom': '<circle class="st" cx="10" cy="9" r="7"/><path class="st" style="stroke-width:3" d="M15 14l7 8"/><path class="st" d="M10 5v8M6 9h8"/>',
  'Hand': '<path d="M5 12L4 5l2-1 2 6V2h2v8l1-9h2v9l2-7 2 1-1 8 3-2 2 1-5 9-2 3H8z"/>',
  'Comp': '<path d="M2 3h4v19l-4-3zM7 3h3v17H7zM11 4h3v13h-3zM15 4h3v9h-3zM19 5h3l-3 6z"/>', 'Line': '<path class="st" style="stroke-width:3" d="M5 21L19 3"/>',
  'Play': '<path d="M2 8h4l6-6v20l-6-6H2z"/><path class="st" d="M15 8c2 3 2 5 0 8M18 5c4 5 4 9 0 14"/>',
  'Color': '<path d="M1 15l9-1V9L7 4l2-1 13 9-9 9-1-3-10 3z"/>'
};
$('tools').innerHTML = '<div class="cell" style="width:16px"><svg width="8" height="14" viewBox="0 0 8 14"><path d="M0 0h8v3H0zM0 5h8v3H0zM0 10h8v3H0z"/></svg></div>' +
  Object.entries(tools).map(([n, p], i) => `<button class="${i ? '' : 'on'}" aria-label="${n}"><svg class="ico" viewBox="0 0 24 24">${p}</svg></button>`).join('');

// inserts in the inspector and the control room
const fx = ['', 'Pro-Q 3', 'Pro-C 2', 'Pro-C 2', 'Pro-DS', 'Pro-DS', ...Array(10).fill('')];
$('rack').insertAdjacentHTML('beforeend', fx.map(n => n
  ? `<button class="slotl fx"><svg style="margin-left:5px" width="15" height="15"><use href="#byp"/></svg><svg style="margin-left:6px" width="17" height="17"><use href="#e"/></svg><span>${n}</span><svg class="me-1" width="14" height="8" viewBox="0 0 14 8"><path d="M0 0h14L7 7z"/></svg></button>`
  : '<button class="slotl" aria-label="Empty insert slot"></button>').join(''));
const slots = (names, c) => names.map(n => `<div class="slot"><button class="${n ? c : ''}" aria-label="${n || 'Empty slot'}">${n}</button></div>`).join('');
$('mon').innerHTML = slots(['', '', 'Sonarworks_Reference4_x64', '', '', '', '', ''], 'bl');
$('ins').innerHTML = slots(['', 'Youlean Loudness Meter 2', 'ADPTR MetricAB', 'Pro-Q 3', '', '', '', ''], 'fl');
let tk = '';
for (let a = -225; a <= 45; a += 22.5) tk += `<path d="M45 0h8" transform="rotate(${a})"/>`;
$('ticks').innerHTML = tk;
$('lvl').innerHTML = [[0, 9], [6, 24], [12, 38], [18, 53], [24, 67], [40, 96]].map(([n, y]) =>
  `<path d="M0 ${y}h32M48 ${y}h32" stroke="#666"/><text x="40" y="${y + 2}">${n}</text>`).join('');

// tracks: number, name, kind, colour, clips [start, end, shape, label, fade, edited]
const six = (s, e, n) => { const o = []; for (let i = 0; i < n.length - 1; i++) o.push([n[i], n[i + 1], s, e]); return o; };
const dr = [...six('dr', 'Drums - Pat', [640, 721.5, 804.5, 888, 970, 1053, 1136, 1218, 1300.5, 1383]), ...six('dr', 'Drums - Pat', [1394, 1476.5, 1559, 1641.5, 1724.5])];
const ba = [...six('ba', 'Dub Bass - P', [640, 721.5, 804.5, 888, 971]), ...six('ba', 'Dub Bass - P', [1053, 1136, 1218, 1300.5, 1383.5]), ...six('ba', 'Dub Bass - P', [1476.5, 1559, 1641.5, 1724.5, 1808])];
const sa = [...six('sa', 'Sample - Pat', [640, 721.5, 804.5, 888, 970, 1053, 1136, 1218, 1300.5, 1383]), [1383.5, 1394, '', ''], ...six('sa', 'Sample - Pat', [1394, 1476.5, 1559, 1641.5, 1724.5, 1808])];
const leadC = [[639, 664, 'dm'], [721, 747, 'dm'], [803, 843, 'fu', 'REC_'], [847, 892, 'fu', 'REC_4'], [892, 965, 'fu', 'REC_55'], [970, 1042, 'fv', 'REC_77'], [1053, 1077, 'dm'], [1135, 1160, 'dm'], [1218, 1281, 'fu', 'REC_92'], [1281, 1304, 'fu'], [1476, 1502, 'dm'], [1558, 1584, 'dm']];
const leadL = (r) => [...[[656, 680], [680, 709], [710, 733], [739, 762], [763, 792], [793, 817], [963, 981], [1068, 1093], [1094, 1122], [1124, 1147], [1151, 1176], [1177, 1205], [1206, 1229], [1492, 1517], [1518, 1547], [1548, 1570], [1575, 1600], [1601, 1629], [1630, 1653]].map(([a, b]) => [a, b, b - a > 26 ? 'md' : 'bl']),
  [839, r ? 852 : 850, 'sp'], [981, 1047, 'tr', r ? 'REC_' : 'REC_80', 0, r], [1300, r ? 1345 : 1344, 'fu', r ? 'REC_9' : ''], [1394, 1429, 'md'], [1429, 1462, 'md'], [1462, 1488, 'dm']];
const lead2 = (r) => [...[[650, 690, 'du', 'REC_'], [732, 773, 'du', 'REC_'], [1063, 1104, 'du', 'REC_2'], [1146, 1187, 'du', 'REC_'], [1486, 1528, 'du', 'REC_2'], [1570, 1610, 'du', 'REC_']].map(c => [c[0], c[1], c[2], r ? '' : c[3], 1]),
  ...[[701, 719], [783, 803], [1115, 1133], [1197, 1215], [1538, 1557], [1621, 1639]].map(([a, b]) => [a, b, 'ta']), [1037, 1057, 'fu'], [1338, r ? 1387 : 1385, 'fu', r ? '' : 'REC_9']];
const dbl = (r) => [[638, 658, 'bb'], [701, 719, 'tb'], [721, 740, 'bb'], [783, 802, 'tb'], r ? [823, 830, ''] : [821, 827, ''], [888, 891, ''], [891, 904, 'sp'], ...(r ? [[930, 938, 'sp']] : [[925, 933, 'sp'], [935, 943, 'sp']]), [962, 983, 'dm'], [1052, 1070, 'bb'], [1115, 1133, 'tb'], [1135, 1153, 'bb'], [1197, 1215, 'tb'],
  [1217, 1304, 'fu', r ? 'REC_93' : 'REC_89', 0, 1], [1403, 1446, 'du'], [1446, 1473, 'dm'], [1476, 1494, 'bb'], [1538, 1557, 'tb'], [1558, 1577, 'bb'], [1621, 1639, 'tb'], ...(r ? [[1667, 1692, 'md'], [1707, 1730, 'bb', '', 1]] : [[1641, 1669, 'bl'], [1690, 1709, 'bb']])];
const dbl2 = (r) => [...[[710, 739], [792, 823], [1123, 1153], [1206, 1235], [1547, 1577], [1630, 1659]].map(([a, b], i) => [a, b, 'dp', i == 1 && !r ? 'REC_' : '']), ...(r ? [[1735, 1753, 'bs'], [1771, 1783, 'bs'], [1786, 1798, 'bs']] : [[1755, 1773, 'bs'], [1781, 1788, '']])];
const tracks = [
  [2, 'Maschine', 'keys', 'R', []],
  [13, 'Midi Drums', 'midi', 'O', [[598, 640, 'dr1', ''], ...dr]],
  [14, 'Midi Bass', 'midi', 'O', ba],
  [15, 'Midi Sample', 'midi', 'O', [[598, 640, 'dr1', ''], ...sa]],
  [16, 'BEAT', 'grpi', 'O', []], [17, 'Lead C', 'wav', 'B', leadC], [18, 'VOX LEAD', 'grpi', 'B', []],
  [19, 'Lead L', 'wav', 'T', leadL(0)], [20, 'Lead R', 'wav', 'T', leadL(1)], [21, 'Lead L2', 'wav', 'T', lead2(0)], [22, 'Lead R2', 'wav', 'T', lead2(1)],
  [23, 'VOX LEAD WIDE', 'grpi', 'T', []], [24, 'VOX LEAD ALL', 'grpi', 'B', []],
  [25, 'Double L1', 'wav', 'G', dbl(0)], [26, 'Double R1', 'wav', 'G', dbl(1)], [27, 'Double L2', 'wav', 'G', dbl2(0)], [28, 'Double R2', 'wav', 'G', dbl2(1)],
  [29, 'VOX DOUBLE WIDE', 'grpi', 'G', []],
  [30, 'Double C1', 'wav', 'H', [[855, 894, 'fu', 'REC_'], [942, 968, 'fu'], [970, 1036, 'th', 'REC_81'], [1037, 1058, 'fv'], [1217, 1304, 'fu', 'REC_91', 0, 1], [1399, 1404, ''], [1404, 1410, ''], [1411, 1420, 'bs'], [1420, 1425, ''], [1425, 1431, ''], [1432, 1440, 'bs'], [1443, 1488, 'th', 'REC_1', 1], [1724, 1737, 'bs']]],
  [31, 'Double C2', 'wav', 'H', [[963, 977, 'bl'], [1018, 1064, 'th', 'REC_1', 1], [1796, 1832, 'th', 'REC_', 1]]],
  [32, '', 'grpi', 'H', []]
];

const S = t => Math.max(0, Math.sin(Math.PI * t));
const env = {
  bl: t => t < .18 || t > .92 ? 1 : 7 * Math.pow(S((t - .18) / .74), .5), bs: t => 4 * Math.pow(S(t), .5), bb: t => 7 * Math.pow(S(t), .35),
  dm: t => 10 * (t < .5 ? .4 + t * 1.2 : Math.max(.1, 1.9 - 1.8 * t)),
  ta: t => t < .3 ? 12 * S(.3 + t) : t > .85 ? 4 : 6, tb: t => t < .25 ? 11 : 10 * (1.1 - .5 * t),
  md: t => 9 * Math.pow(S(t), .25) * (.8 + .2 * Math.sin(t * 14)), fu: t => 18 * (.8 + .2 * Math.sin(t * 17)), fv: t => 14 * Math.max(.1, Math.pow(Math.abs(Math.sin(t * 9)), .5)),
  sp: t => 14 * S(t), th: t => 4, dp: t => t < .62 ? 7 * Math.pow(S(.1 + t * 1.1), .7) : Math.max(1, 4 - 9 * (t - .55)),
  du: t => Math.max(1, 6 * Math.pow(Math.abs(Math.sin(2 * Math.PI * t)), .7)), tr: t => Math.max(1, 9 * (.6 + .5 * t) * (Math.abs(Math.sin(2.6 * Math.PI * t + .4)) - .2))
};
const rough = { fu: .7, fv: .5, sp: .5, md: .4, du: .4, th: .6, bb: .3, tb: .3, ta: .4 };
function art(s, w) {
  let o = '';
  const R = (x, y, a, b, f) => o += `<rect class="nt" x="${x.toFixed(1)}" y="${y}" width="${a}" height="${b}"${f ? ' opacity=".3"' : ''}/>`;
  if (s == 'dr1') { for (let i = 0; i < 5; i++) R(4 + i * 5, 38, 2, 5); R(32, 38, 8, 5); }
  else if (s == 'dr') { for (let x = 2; x < w - 3; x += 2.6) { if (rnd() < .35) R(x, 25, 1, 6); if (rnd() < .7) R(x, 32, 1, 5); if (rnd() < .45) R(x, 37, 1, 5); } R(1, 20, 10, 3, 1); }
  else if (s == 'ba') { [[2, 3], [10, 5], [41, 6], [51, 2], [62, 6], [71, 3], [77, 2]].forEach(([x, a]) => R(x, 25, a, 3)); R(20, 5, 8, 4, 1); R(70, 5, 6, 4, 1); }
  else if (s == 'sa') { for (let i = 0; i < 7; i++) R(8 + i * 11, 24, 1, 1, 0); for (let i = 0; i < 6; i++) R(5 + i * 12 + rnd() * 5, 28 + Math.floor(rnd() * 3) * 5, 1.2, 4); R(76, 38, 1, 4); R(79, 38, 1, 4); }
  else if (env[s]) {
    const up = [], dn = [], n = Math.max(5, Math.round(w / 1.5)), k = rough[s] || .2;
    for (let i = 0; i <= n; i++) {
      const x = (3 + (w - 7) * i / n).toFixed(1), a = Math.max(.8, env[s](i / n));
      up.push(x + ' ' + (24 - a * (1 - k * rnd())).toFixed(1)); dn.unshift(x + ' ' + (24 + a * (1 - k * rnd())).toFixed(1));
    }
    o = `<path class="wv" d="M${up.join('L')}L${dn.join('L')}Z"/>`;
  }
  return `<svg viewBox="0 0 ${w} 47" preserveAspectRatio="none">${o}</svg>`;
}
const clip = (c, col) => `<div class="clip c${col}" style="${at(c[0], c[1])}">${art(c[2], c[1] - c[0])}` +
  (c[3] ? (env[c[2]] ? '<span class="veil"></span>' : '') + `<i>${c[3]}</i>` : '') + (c[4] ? '<u></u>' : '') +
  (c[5] ? '<svg style="left:auto;right:4px;top:12px;width:20px;height:14px" viewBox="0 0 20 14"><path class="st" d="M1 6l4 6 5-9 5 9 4-7"/></svg>' : '') + '</div>';

let rows = `<div class="rw io trk cR"><div class="strip">${use('fold')}</div><div class="tb d-block"><span class="nam" style="font-size:13px;line-height:18px;padding-left:5px">Input/Output Channels</span></div></div>
<div class="rw mk trk cR"><div class="strip">${use('mark')}</div><div class="tb"><div class="ms"><button aria-label="Add marker"><svg width="18" height="18"><use href="#mk1"/></svg></button><button aria-label="Add cycle marker"><svg width="20" height="18"><use href="#mk2"/></svg></button></div><div class="nam">Markers</div><span></span><div class="kx"><button class="kb tx">Locate</button><button class="kb tx">Cycle</button><button class="kb tx">Zoom</button></div></div></div>`;
const lines = [640, 804.5, 970.5, 1053.5, 1218, 1394.6, 1475.7, 1641.4, 1724.5];
let lanes = '<div class="rw io lane"></div><div class="rw mk lane">' +
  `<div class="full" style="${at(598, 1859)}">1: Full${lines.map(x => `<s style="left:${((x - 600) / 1257 * 100).toFixed(3)}%"></s>`).join('')}</div>` +
  [[640, 710, '1: Hook'], [804, 886, '2: Verse 1'], [970, 1072, '3: PreHook 1'], [1053, 1134, '4: Hook 2', 1], [1218, 1300, '5: Verse 2'], [1394, 1501, '6: Pre-Hook 2'], [1476, 1558, '7: Hook 3', 1], [1641, 1718, '8: Bridge'], [1724, 1841, '10: Outro Hook']]
    .map(m => `<div class="flag" style="${at(m[0], m[1])};top:${m[3] ? 59 : 79}px">${m[2]}</div>`).join('') + '</div>';
tracks.forEach(([no, name, kind, col, clips], i) => {
  const t = i % 2 ? ' tall' : '', last = no == 32;
  const e = `<button class="kb" aria-label="Edit">${use('e')}</button>`, rm = `<div class="kb w2">${use('rec')}${use('spk')}</div>`;
  const keys = last ? '' : kind == 'grpi' ? e + `<select class="kb" aria-label="${name} automation parameter"><option>Volume</option></select>`
    : kind == 'keys' ? rm + `<div class="kb w2">${use('e')}${use('keys')}</div>` : kind == 'midi' ? rm + e
    : rm + e + `<div class="kb w2"><button>R</button><button>W</button></div><button class="kb" aria-label="Freeze">${use('frz')}</button>`;
  rows += `<div class="rw trk c${col}${t}${no == 18 ? ' sel' : ''}"><div class="strip">${use(kind)}<span>${last ? '' : no}</span></div><div class="tb"><div class="ms"><button aria-label="Mute">${last ? '' : 'M'}</button><button aria-label="Solo">${last ? '' : 'S'}</button></div><div class="nam">${name}</div><div class="sq"></div><div class="kx">${keys}</div></div></div>`;
  lanes += `<div class="rw lane${t}${kind == 'grpi' && !last ? ' auto' : ''}">${clips.map(c => clip(c, col)).join('')}</div>`;
});
$('rows').innerHTML = rows;
let g = `<div class="bgr" style="${at(598, 1859)}"></div>`, over = '';
for (let b = 1; b <= 65; b += 4) {
  g += `<div class="gl${[5, 13, 41, 49, 57, 65].includes(b) ? ' t' : ''}" style="left:${pct(barX(b) - L0 - 1)}"></div>`;
  over += `<div class="gl o" style="left:${pct(barX(b) - L0 - 1)}"></div>`;
}
[598.5, ...lines, 1859].forEach(x => g += `<div class="gl r" style="left:${pct(x - L0)}"></div>`);
$('canvas').innerHTML = g + lanes + over;
let r = `<div class="rng" style="${at(598, 1859)}"></div><svg class="position-absolute" style="left:${pct(8)};color:#fff" width="12" height="12"><path d="M0 0h12L0 12z"/></svg><svg class="position-absolute" style="left:${pct(1257)};color:#fff" width="12" height="12"><path d="M0 0h12v12z"/></svg>`;
for (let b = 1; b <= 65; b += 4) r += `<b style="left:${pct(barX(b) - L0)}${b > 61 ? ';color:#fff;border-color:#fff' : ''}">${b}</b>`;
$('ruler').innerHTML = r;
</script>
<script src="https://cdn.jsdelivr.net/npm/bootstrap@5.3.0/dist/js/bootstrap.bundle.min.js"></script>
</body>
</html>
